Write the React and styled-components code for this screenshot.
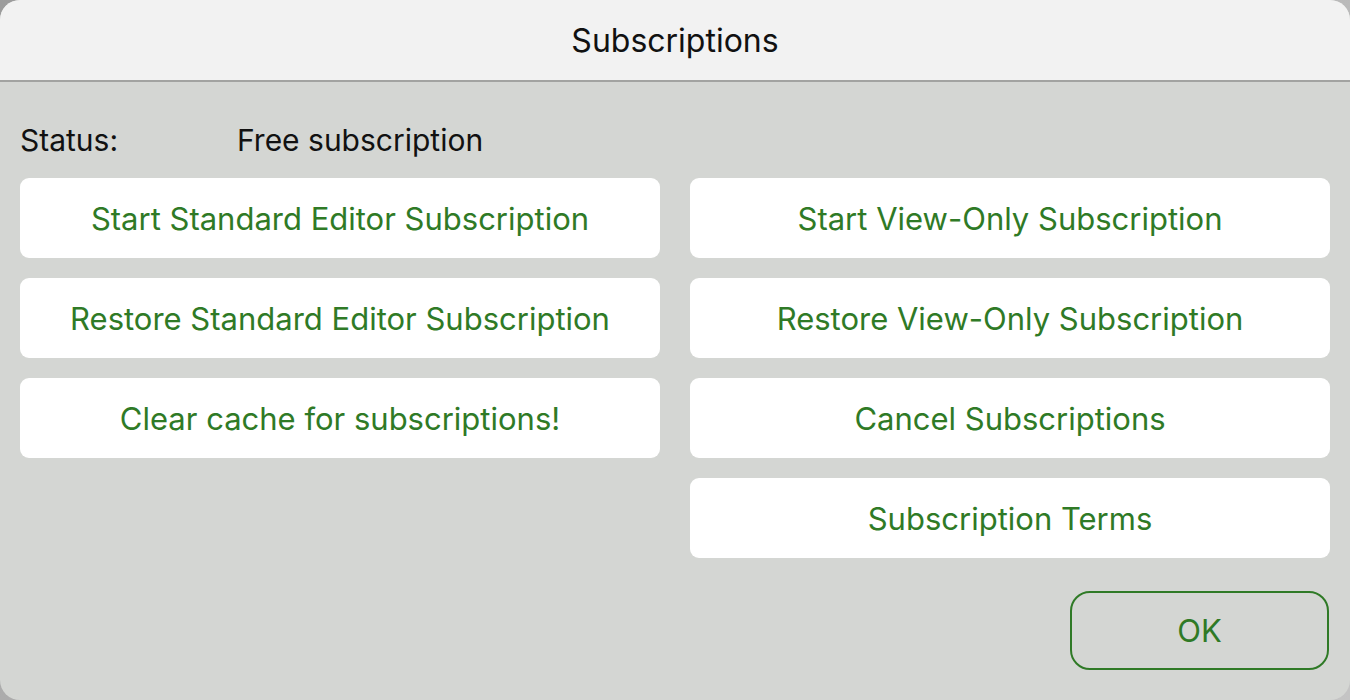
import React from "react";
import styled, { createGlobalStyle } from "styled-components";

const Global = createGlobalStyle`
  html, body { margin: 0; padding: 0; }
  body {
    width: 1350px;
    height: 700px;
    overflow: hidden;
    background: linear-gradient(135deg, #9c9c9c 0%, #b8b8b8 60%, #c4c4c4 100%);
    font-family: Inter, "Liberation Sans", Arial, sans-serif;
  }
`;

const Dialog = styled.div`
  width: 1350px;
  height: 700px;
  border-radius: 20px;
  overflow: hidden;
  background: #d4d6d3;
  display: flex;
  flex-direction: column;
`;

const Header = styled.div`
  height: 79px;
  flex: none;
  background: #f2f2f2;
  border-bottom: 2px solid #a2a3a1;
  display: flex;
  align-items: center;
  justify-content: center;
  font-size: 32px;
  color: #111;
  padding-top: 1px;
`;

const Body = styled.div`
  padding: 20px 20px 0 20px;
  display: flex;
  flex-direction: column;
`;

const StatusRow = styled.div`
  height: 76px;
  display: flex;
  align-items: center;
  font-size: 30px;
  color: #111;
`;

const StatusLabel = styled.span`
  width: 217px;
`;

const Grid = styled.div`
  display: grid;
  grid-template-columns: 640px 640px;
  column-gap: 30px;
`;

const Column = styled.div`
  display: flex;
  flex-direction: column;
  gap: 20px;
`;

const Button = styled.button`
  height: 80px;
  border: none;
  border-radius: 9px;
  background: #ffffff;
  color: #2f7a26;
  font-family: Inter, "Liberation Sans", Arial, sans-serif;
  font-size: 31px;
  display: flex;
  align-items: center;
  justify-content: center;
  padding: 0;
  cursor: pointer;
`;

const Footer = styled.div`
  display: flex;
  justify-content: flex-end;
  padding-top: 33px;
`;

const OkButton = styled.button`
  width: 259px;
  height: 79px;
  border: 2px solid #2f7a26;
  border-radius: 20px;
  background: transparent;
  color: #2f7a26;
  font-family: Inter, "Liberation Sans", Arial, sans-serif;
  font-size: 31px;
  cursor: pointer;
  margin-right: 1px;
`;

export default function App() {
  const left = [
    "Start Standard Editor Subscription",
    "Restore Standard Editor Subscription",
    "Clear cache for subscriptions!",
  ];
  const right = [
    "Start View-Only Subscription",
    "Restore View-Only Subscription",
    "Cancel Subscriptions",
    "Subscription Terms",
  ];
  return (
    <>
      <Global />
      <Dialog>
        <Header>Subscriptions</Header>
        <Body>
          <StatusRow>
            <StatusLabel>Status:</StatusLabel>
            <span>Free subscription</span>
          </StatusRow>
          <Grid>
            <Column>
              {left.map((t) => (
                <Button key={t}>{t}</Button>
              ))}
            </Column>
            <Column>
              {right.map((t) => (
                <Button key={t}>{t}</Button>
              ))}
            </Column>
          </Grid>
          <Footer>
            <OkButton>OK</OkButton>
          </Footer>
        </Body>
      </Dialog>
    </>
  );
}
